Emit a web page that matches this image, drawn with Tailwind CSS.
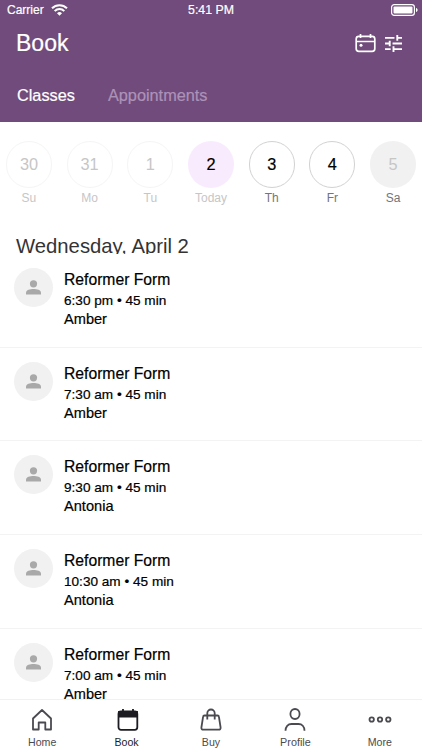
<!DOCTYPE html>
<html lang="en">
<head>
  <meta charset="UTF-8">
  <meta name="viewport" content="width=device-width, initial-scale=1.0">
  <title>Book</title>
  <script src="https://cdn.jsdelivr.net/npm/@tailwindcss/browser@4"></script>
</head>
<body class="h-[750px] overflow-hidden flex flex-col bg-white text-black font-['Liberation_Sans',Arial,sans-serif]">

  <!-- Header -->
  <header class="h-[122px] shrink-0 bg-[#704b7b] text-white">
    <div class="h-5 pl-[7px] pr-1 grid grid-cols-3 items-center">
      <div class="flex items-center gap-[7px]">
        <span class="text-[12px] leading-5 [-webkit-text-stroke:0.2px]">Carrier</span>
        <svg class="w-[17px] h-3" viewBox="0 0 17 12" fill="none" stroke="currentColor" stroke-width="2">
          <path d="M1 4.3a10.6 10.6 0 0 1 15 0M3.7 7.1a6.8 6.8 0 0 1 9.6 0"/>
          <path d="M8.5 11.8L6 9.3a3.6 3.6 0 0 1 5 0z" fill="currentColor" stroke="none"/>
        </svg>
      </div>
      <span class="text-[12.3px] leading-[18px] pr-[3px] pb-px text-center [-webkit-text-stroke:0.2px]">5:41 PM</span>
      <svg class="w-[27px] h-3 justify-self-end" viewBox="0 0 27 12" fill="none">
        <rect x=".6" y=".6" width="22.8" height="10.8" rx="2.6" stroke="currentColor" stroke-width="1.2"/>
        <rect x="2.5" y="2.5" width="19" height="7" rx="1" fill="currentColor"/>
        <path d="M25 4v4c1-.3 1.6-1 1.6-2S26 4.3 25 4z" fill="currentColor"/>
      </svg>
    </div>
    <div class="h-[46px] pl-4 pr-5 flex items-center justify-between">
      <h1 class="text-[23px] leading-[46px] pb-px [-webkit-text-stroke:0.2px]">Book</h1>
      <div class="flex items-center gap-[9px]">
        <svg class="w-[21px] h-5" viewBox="0 0 21 20" fill="none" stroke="currentColor" stroke-width="1.7">
          <rect x="1.2" y="3.3" width="18.6" height="15" rx="2.6"/>
          <path d="M1.2 8.5h18.6M5.5 1v4M15.5 1v4"/>
          <circle cx="6" cy="12.3" r="1.5" fill="currentColor" stroke="none"/>
        </svg>
        <svg class="w-[17px] h-[17px]" viewBox="3 3 18 18" fill="currentColor">
          <path d="M3 17v2h6v-2H3zM3 5v2h10V5H3zm10 16v-2h8v-2h-8v-2h-2v6h2zM7 9v2H3v2h4v2h2V9H7zm14 4v-2H11v2h10zm-6-4h2V7h4V5h-4V3h-2v6z"/>
        </svg>
      </div>
    </div>
    <nav class="h-14 pl-[17px] flex items-center gap-[33px] text-[16.3px] [-webkit-text-stroke:0.2px]">
      <a class="leading-6 pt-[2px]">Classes</a>
      <a class="leading-6 pt-[2px] text-[#ad92b8]">Appointments</a>
    </nav>
  </header>

  <!-- Week strip -->
  <section id="days" class="h-[113px] shrink-0 -mx-[1.4px] pt-[19px] grid grid-cols-7 text-center"></section>

  <h2 class="h-[19px] shrink-0 overflow-hidden pl-4 text-[20.3px] leading-[22px] text-[#333]">Wednesday, April 2</h2>

  <!-- Classes -->
  <main id="classes" class="flex-1 min-h-0 overflow-hidden"></main>

  <!-- Bottom bar -->
  <footer class="h-[51px] shrink-0 border-t border-[#f1f1f1] bg-white grid grid-cols-5 text-[10.6px] text-[#4a4a50]">
    <div class="pt-2 flex flex-col items-center">
      <svg class="w-6 h-6" viewBox="0 0 24 24" fill="none" stroke="currentColor" stroke-width="1.8" stroke-linejoin="round">
        <path d="M3 10.5L12 2l9 8.5v11h-5.7v-7H8.700v7H3z"/>
      </svg>
      <span class="leading-[21px]">Home</span>
    </div>
    <div class="pt-2 pl-[3px] flex flex-col items-center text-[#1c1c22]">
      <svg class="w-6 h-6" viewBox="0 0 24 24" fill="none" stroke="currentColor" stroke-width="1.8">
        <rect x="2.5" y="3.5" width="18.800" height="18.300" rx="2.5"/>
        <path d="M3 4h18v4.500H3z" fill="currentColor"/>
        <path d="M7 1v4M17 1v4"/>
      </svg>
      <span class="leading-[21px] pr-[3px]">Book</span>
    </div>
    <div class="pt-2 flex flex-col items-center">
      <svg class="w-6 h-6" viewBox="0 0 24 24" fill="none" stroke="currentColor" stroke-width="1.8" stroke-linejoin="round">
        <path d="M5.500 7.500h13c.8 0 1.300.4 1.400 1.200l1.700 10.800c.2 1.300-.6 2.200-1.800 2.200H4.200c-1.200 0-2-.9-1.800-2.200L4.100 8.700c.1-.8.600-1.200 1.400-1.200z"/>
        <path d="M8.300 11.500V5.200a3.700 3.700 0 0 1 7.400 0v6.300"/>
      </svg>
      <span class="leading-[21px]">Buy</span>
    </div>
    <div class="pt-2 flex flex-col items-center">
      <svg class="w-6 h-6" viewBox="0 0 24 24" fill="none" stroke="currentColor" stroke-width="1.8">
        <ellipse cx="12" cy="6" rx="4.600" ry="5"/>
        <path d="M2.500 22.800c0-4.300 2.500-6.800 6-6.800h7c3.500 0 6 2.500 6 6.800"/>
      </svg>
      <span class="text-[10.8px] leading-[21px]">Profile</span>
    </div>
    <div class="pt-2 flex flex-col items-center">
      <svg class="w-6 h-6" viewBox="0 0 24 24" fill="none" stroke="currentColor" stroke-width="1.8">
        <circle cx="3.700" cy="11.500" r="2.200"/>
        <circle cx="12" cy="11.500" r="2.200"/>
        <circle cx="20.300" cy="11.500" r="2.200"/>
      </svg>
      <span class="leading-[21px]">More</span>
    </div>
  </footer>

  <script>
    const past = "border border-[#f5f5f5] text-[#c6c6c6]";
    const open = "border border-[#d2d2d2] text-black [-webkit-text-stroke:0.2px]";
    const days = [
      { num: 30, label: "Su", circle: past, text: "text-[#c6c6c6]" },
      { num: 31, label: "Mo", circle: past, text: "text-[#c6c6c6]" },
      { num: 1, label: "Tu", circle: past, text: "text-[#c6c6c6]" },
      { num: 2, label: "Today", circle: "bg-[#f9ebfe] text-black [-webkit-text-stroke:0.2px]", text: "text-[#c6c6c6]" },
      { num: 3, label: "Th", circle: open, text: "text-[#757575]" },
      { num: 4, label: "Fr", circle: open, text: "text-[#757575]" },
      { num: 5, label: "Sa", circle: "bg-[#f1f1f1] text-[#c6c6c6]", text: "text-[#757575]" },
    ];

    const classes = [
      { time: "6:30 pm", teacher: "Amber" },
      { time: "7:30 am", teacher: "Amber" },
      { time: "9:30 am", teacher: "Antonia" },
      { time: "10:30 am", teacher: "Antonia" },
      { time: "7:00 am", teacher: "Amber" },
    ];

    document.getElementById("days").innerHTML = days.map((day) => `
      <div class="flex flex-col items-center">
        <div class="w-[46px] h-[47px] rounded-full flex items-center justify-center text-[16.3px] ${day.circle}">${day.num}</div>
        <span class="text-[12px] leading-5 ${day.text}">${day.label}</span>
      </div>`).join("");

    document.getElementById("classes").innerHTML = classes.map((item) => `
      <div class="h-[93.7px] pl-[14px] pt-[14px] flex gap-[11px] border-b border-[#f3f3f3]">
        <div class="w-[39px] h-[39px] shrink-0 rounded-full bg-[#f1f1f1] flex items-center justify-center">
          <svg class="w-[15px] h-[15px]" viewBox="0 0 15 15" fill="#a9a9a9">
            <circle cx="7.5" cy="3.8" r="3.6"/>
            <path d="M0 14.5v-1.800C0 10 4 9 7.500 9s7.500 1 7.500 3.700v1.800z"/>
          </svg>
        </div>
        <div>
          <h3 class="text-[15.7px] leading-6 [-webkit-text-stroke:0.2px]">Reformer Form</h3>
          <p class="text-[13.6px] leading-[17px] [-webkit-text-stroke:0.2px]">${item.time} • 45 min</p>
          <p class="text-[14.6px] leading-5 [-webkit-text-stroke:0.2px]">${item.teacher}</p>
        </div>
      </div>`).join("");
  </script>
</body>
</html>
